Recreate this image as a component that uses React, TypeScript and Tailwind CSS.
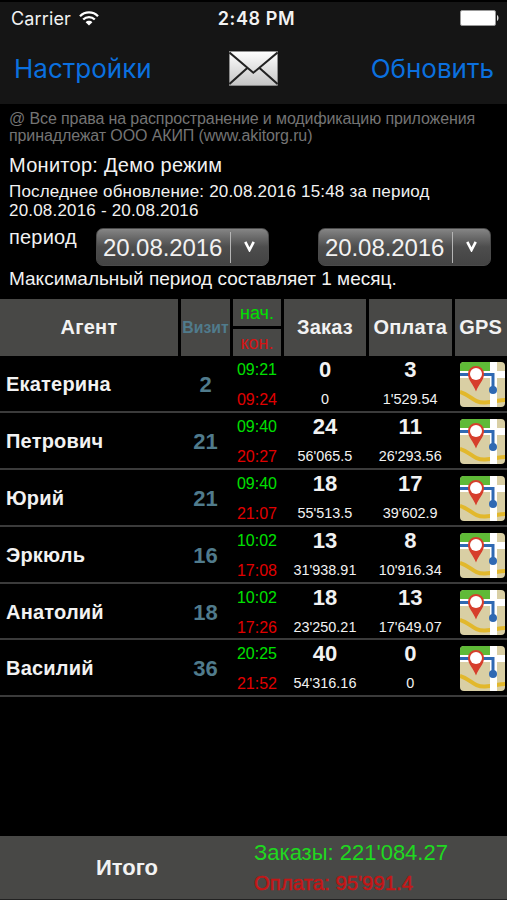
import { clsx } from 'clsx'

const agents = [
  { name: 'Екатерина', visits: 2, start: '09:21', end: '09:24', orders: 0, orderSum: '0', payments: 3, paymentSum: "1'529.54" },
  { name: 'Петрович', visits: 21, start: '09:40', end: '20:27', orders: 24, orderSum: "56'065.5", payments: 11, paymentSum: "26'293.56" },
  { name: 'Юрий', visits: 21, start: '09:40', end: '21:07', orders: 18, orderSum: "55'513.5", payments: 17, paymentSum: "39'602.9" },
  { name: 'Эркюль', visits: 16, start: '10:02', end: '17:08', orders: 13, orderSum: "31'938.91", payments: 8, paymentSum: "10'916.34" },
  { name: 'Анатолий', visits: 18, start: '10:02', end: '17:26', orders: 18, orderSum: "23'250.21", payments: 13, paymentSum: "17'649.07" },
  { name: 'Василий', visits: 36, start: '20:25', end: '21:52', orders: 40, orderSum: "54'316.16", payments: 0, paymentSum: '0' },
]

const columns = 'grid grid-cols-[178px_49px_48px_82px_82.5px_52.5px] gap-x-[3px]'

function WifiIcon() {
  return (
    <svg width="20" height="15" viewBox="0 0 20 15" fill="none" stroke="#fff" strokeWidth="2.3">
      <path d="M1 5.2C6 0.2 14 0.2 19 5.2" />
      <path d="M4.2 8.5C7.4 5.3 12.6 5.3 15.8 8.5" />
      <path d="M10 14.6L6.6 11.2C8.5 9.3 11.5 9.3 13.4 11.2Z" fill="#fff" stroke="none" />
    </svg>
  )
}

function BatteryIcon() {
  return (
    <svg width="39" height="16" viewBox="0 0 39 16">
      <rect x="0.5" y="0.5" width="35" height="15" rx="1.5" fill="#fff" stroke="#999" />
      <path d="M37 5C39 6 39 10 37 11Z" fill="#ddd" />
    </svg>
  )
}

function MailIcon() {
  return (
    <svg className="mt-px -ml-px" width="49" height="35" viewBox="0 0 49 35">
      <defs>
        <linearGradient id="mail" x1="0" y1="0" x2="0" y2="1">
          <stop offset="0" stopColor="#fff" />
          <stop offset="1" stopColor="#c4c4c4" />
        </linearGradient>
      </defs>
      <rect x="0.5" y="0.5" width="48" height="34" fill="url(#mail)" stroke="#999" strokeWidth="0.6" />
      <path d="M0.5 1.5L24.3 21.8L48.5 1.5M0.5 33L18.3 17M48.5 33L30.5 17" fill="none" stroke="#222" strokeWidth="2" />
    </svg>
  )
}

function MapIcon() {
  return (
    <svg width="45" height="45" viewBox="0 0 45 45">
      <defs>
        <clipPath id="tile">
          <rect width="45" height="45" rx="4" />
        </clipPath>
      </defs>
      <g clipPath="url(#tile)">
        <rect width="45" height="45" fill="#d9cfa4" />
        <path d="M0 0H30V9H0Z" fill="#5fba37" />
        <path d="M0 9H45V16H0Z" fill="#fff" />
        <path d="M0 30C11 33 13 41 25 40.5C34 40 39 38 45 38" fill="none" stroke="#e2b82c" strokeWidth="4" />
        <path d="M30 0H37V45H30Z" fill="#fff" />
        <path d="M0 12.5H33V28" fill="none" stroke="#2f69b3" strokeWidth="3" />
        <circle cx="33" cy="28" r="4" fill="#2f69b3" />
        <path d="M16 29.5C13.5 22.5 8 18.5 8 12A8 8 0 0 1 24 12C24 18.5 18.5 22.5 16 29.5Z" fill="#d63e2c" />
        <circle cx="16" cy="12" r="6" fill="#fff" />
      </g>
    </svg>
  )
}

function DateSelect({ value }: { value: string }) {
  return (
    <button className="flex h-[38px] w-[173px] items-center rounded-[7px] border border-[#4a4a4a] bg-linear-to-b from-[#858585] via-[#4d4d4d] via-50% to-[#434343] pl-[6px]">
      <span className="w-[120px] whitespace-nowrap pt-px text-left text-[24px] leading-none tracking-[-0.08px]">{value}</span>
      <span className="ml-[7px] h-[31px] w-px bg-[#b5b5b5]" />
      <svg className="mb-px ml-[13px]" width="11" height="11" viewBox="0 0 11 11">
        <path d="M1.3 0.8L5.5 9L9.7 0.8" fill="none" stroke="#fff" strokeWidth="2.6" />
      </svg>
    </button>
  )
}

function HeaderCell({ children, className }: { children: string; className?: string }) {
  return (
    <div className={clsx('flex items-center justify-center bg-[#484846] leading-none font-bold', className)}>{children}</div>
  )
}

function Amount({ count, sum }: { count: number; sum: string }) {
  return (
    <div className="flex flex-col items-center">
      <b className="text-[22px] leading-[28px]">{count}</b>
      <span className="mt-px text-[14.4px] leading-[28px]">{sum}</span>
    </div>
  )
}

export default function App() {
  return (
    <div className="flex h-[900px] w-[507px] flex-col overflow-hidden bg-black font-['Liberation_Sans',Arial,sans-serif] text-[#f2f2f2]">
      <header className="mt-[2px] h-[102px] shrink-0 bg-[#151515] font-[Inter,sans-serif]">
        <div className="grid h-[32px] grid-cols-3 items-center pr-[8px] pl-[11px]">
          <div className="flex items-center gap-[8px] text-[18px] tracking-[0.15px]">
            Carrier
            <WifiIcon />
          </div>
          <div className="pl-[3px] text-center text-[18px] font-semibold tracking-[0.6px]">2:48 PM</div>
          <div className="flex justify-end">
            <BatteryIcon />
          </div>
        </div>
        <div className="grid h-[68px] grid-cols-[1fr_49px_1fr] items-center pr-[13px] pl-[14px] text-[26px] text-[#0b70df]">
          <button className="text-left">Настройки</button>
          <MailIcon />
          <button className="text-right">Обновить</button>
        </div>
      </header>

      <main className="flex grow flex-col">
        <section className="h-[195px] px-[9px] pt-[6px]">
          <p className="whitespace-nowrap text-[16px] leading-[17px] tracking-[-0.11px] text-[#747474]">
            @ Все права на распространение и модификацию приложения
            <br />
            принадлежат ООО АКИП (www.akitorg.ru)
          </p>
          <p className="mt-[8px] text-[20px] leading-[26px] tracking-[0.28px]">Монитор: Демо режим</p>
          <p className="mt-[4px] whitespace-nowrap text-[17px] leading-[19px] tracking-[0.19px]">
            Последнее обновление: 20.08.2016 15:48 за период
            <br />
            20.08.2016 - 20.08.2016
          </p>
          <div className="mt-[8px] flex">
            <span className="w-[87px] text-[20px] leading-[19px] tracking-[0.2px]">период</span>
            <DateSelect value="20.08.2016" />
            <span className="w-[49px]" />
            <DateSelect value="20.08.2016" />
          </div>
          <p className="mt-px text-[19px] leading-[24px]">Максимальный период составляет 1 месяц.</p>
        </section>

        <div className={clsx(columns, 'h-[57px]')}>
          <HeaderCell className="pb-px text-[20px] tracking-[0.2px]">Агент</HeaderCell>
          <HeaderCell className="text-[15.8px] text-[#507b8c]">Визит</HeaderCell>
          <div className="grid grid-rows-2 gap-[3px] text-[18px]">
            <HeaderCell className="font-normal text-[#00e000]">нач.</HeaderCell>
            <HeaderCell className="pt-px font-normal text-[#d41414]">кон.</HeaderCell>
          </div>
          <HeaderCell className="pb-px text-[20px] tracking-[0.2px]">Заказ</HeaderCell>
          <HeaderCell className="pb-px text-[20px] tracking-[0.2px]">Оплата</HeaderCell>
          <HeaderCell className="pb-px text-[20px] tracking-[0.2px]">GPS</HeaderCell>
        </div>

        {agents.map((agent) => (
          <div key={agent.name} className={clsx(columns, 'h-[56.9px] border-b-2 border-[#3b3b3b]')}>
            <b className="flex items-center pb-[2px] pl-[6px] text-[20px] tracking-[0.2px]">{agent.name}</b>
            <b className="flex items-center justify-center pb-px text-[22px] text-[#507b8c]">{agent.visits}</b>
            <div className="flex flex-col items-center text-[16px] leading-[28px]">
              <span className="text-[#00e000]">{agent.start}</span>
              <span className="mt-px leading-[29px] text-[#e00000]">{agent.end}</span>
            </div>
            <Amount count={agent.orders} sum={agent.orderSum} />
            <Amount count={agent.payments} sum={agent.paymentSum} />
            <div className="pt-[6px] pl-[5px]">
              <MapIcon />
            </div>
          </div>
        ))}
      </main>

      <footer className="flex h-[64px] shrink-0 border-b border-[#222] bg-[#484846]">
        <div className="flex w-[254px] items-center justify-center text-[22px] font-bold">Итого</div>
        <div className="pt-px text-[22px] leading-[31px]">
          <p className="text-[#20d820]">Заказы: 221'084.27</p>
          <p className="text-[20.4px] text-[#c41616] [-webkit-text-stroke:0.5px_#c41616]">Оплата: 95'991.4</p>
        </div>
      </footer>
    </div>
  )
}
